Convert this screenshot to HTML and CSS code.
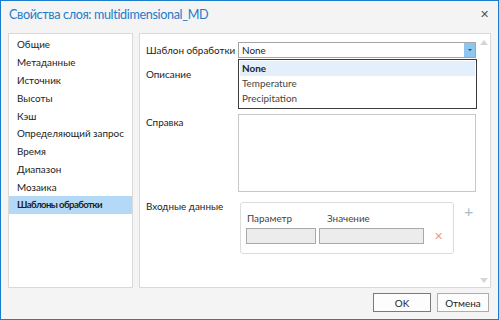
FILE: index.html
```html
<!DOCTYPE html>
<html lang="ru">
<head>
  <meta charset="UTF-8" />
  <title>Свойства слоя</title>
  <link rel="stylesheet" href="styles.css">
</head>
<body>
  <div class="window">
    <div class="titlebar">
      <span class="title">Свойства слоя: multidimensional_MD</span>
      <span class="close">&#x2715;</span>
    </div>

    <div class="content">
      <ul class="nav">
        <li>Общие</li>
        <li>Метаданные</li>
        <li>Источник</li>
        <li>Высоты</li>
        <li>Кэш</li>
        <li>Определяющий запрос</li>
        <li>Время</li>
        <li>Диапазон</li>
        <li>Мозаика</li>
        <li class="selected">Шаблоны обработки</li>
      </ul>

      <div class="panel">
        <div class="form">
          <div class="row row-template">
            <label class="label">Шаблон обработки</label>
            <div class="select">
              <span class="select-value">None</span>
              <span class="select-btn"><span class="tri"></span></span>
              <ul class="dropdown">
                <li class="active">None</li>
                <li>Temperature</li>
                <li>Precipitation</li>
              </ul>
            </div>
          </div>

          <div class="row row-desc">
            <label class="label">Описание</label>
            <div class="field desc"></div>
          </div>

          <div class="row row-help">
            <label class="label">Справка</label>
            <div class="field help"></div>
          </div>

          <div class="row row-input">
            <label class="label">Входные данные</label>
            <div class="params">
              <div class="params-head">
                <span class="col-a">Параметр</span>
                <span class="col-b">Значение</span>
              </div>
              <div class="params-row">
                <span class="cell cell-a"></span>
                <span class="cell cell-b"></span>
                <span class="remove">&#x2715;</span>
              </div>
            </div>
            <span class="add">+</span>
          </div>
        </div>

        <div class="scrollbar">
          <span class="arrow up"></span>
          <span class="arrow down"></span>
        </div>
      </div>
    </div>

    <div class="footer">
      <button class="btn btn-ok">OK</button>
      <button class="btn btn-cancel">Отмена</button>
    </div>
  </div>
</body>
</html>
```

FILE: styles.css
```css
* { box-sizing: border-box; }
body {
  margin: 0;
  font-family: 'Lato', 'Noto Sans', sans-serif;
  font-size: 9.9px;
  color: #222;
}
.window {
  width: 499px;
  height: 320px;
  border: 1px solid #1b7ccc;
  background-color: #f4f4f4;
  display: flex;
  flex-direction: column;
}
.titlebar {
  height: 32px;
  display: flex;
  align-items: center;
  justify-content: space-between;
  padding: 0 9px 6px 8px;
}
.title {
  font-size: 12.6px;
  letter-spacing: -0.35px;
  color: #1d7bc9;
}
.close {
  font-size: 11px;
  color: #555;
}
.content {
  flex: 1;
  display: flex;
  gap: 6px;
  padding: 0 7px 0 7px;
}
.nav {
  list-style: none;
  margin: 0;
  padding: 1px 0 0;
  width: 125px;
  background: #fff;
  border: 1px solid #d9d9d9;
}
.nav li {
  height: 17.9px;
  line-height: 18px;
  padding-left: 8px;
  white-space: nowrap;
}
.nav li.selected {
  background-color: #b4d9f7;
  font-weight: bold;
  font-size: 9.6px;
  letter-spacing: -0.6px;
}
.panel {
  flex: 1;
  display: flex;
  background: #fff;
  border: 1px solid #d9d9d9;
}
.form {
  flex: 1;
  padding: 8px 0 0 6px;
}
.row {
  display: flex;
  margin-bottom: 7px;
}
.label {
  width: 92px;
  flex-shrink: 0;
  line-height: 14px;
  white-space: nowrap;
}
.row-template {
  align-items: center;
}
.select {
  position: relative;
  width: 238px;
  height: 16px;
  border: 1px solid #a5a5a5;
  display: flex;
}
.select-value {
  flex: 1;
  padding-left: 3px;
  line-height: 14px;
}
.select-btn {
  width: 11px;
  background-color: #8fc6ef;
  display: flex;
  align-items: center;
  justify-content: center;
}
.tri {
  border-left: 2px solid transparent;
  border-right: 2px solid transparent;
  border-top: 2px solid #444;
}
.dropdown {
  position: absolute;
  left: -1px;
  top: 16px;
  width: 239px;
  margin: 0;
  padding: 1px 1px 2px;
  list-style: none;
  background: #fff;
  border: 1px solid #3c3c3c;
  z-index: 10;
}
.dropdown li {
  height: 15px;
  line-height: 14px;
  padding-left: 2px;
  color: #444;
}
.dropdown li.active {
  background-color: #e3f0fb;
  font-weight: bold;
  color: #222;
}
.row-desc .label {
  padding-top: 2px;
}
.field {
  width: 238px;
  border: 1px solid #c8c8c8;
}
.desc {
  height: 42px;
}
.help {
  height: 78px;
}
.row-help .label {
  padding-top: 1px;
}
.row-help {
  margin-bottom: 10px;
}
.row-input .label {
  margin-top: -3px;
}
.params {
  width: 214px;
  height: 52px;
  margin-left: 2px;
  border: 1px solid #dcdcdc;
  border-radius: 3px;
  padding: 8px 0 0 5px;
}
.params-head {
  display: flex;
  line-height: 14px;
  color: #444;
}
.col-a { width: 81px; padding-left: 1px; }
.params-row {
  display: flex;
  align-items: center;
  gap: 3px;
  margin-top: 3px;
}
.cell {
  height: 16px;
  background: #ececec;
  border: 1px solid #a9a9a9;
}
.cell-a { width: 70px; }
.cell-b { width: 105px; }
.remove {
  margin-left: 7px;
  color: #e8a08e;
  font-size: 11px;
}
.add {
  margin-left: 10px;
  margin-top: 1px;
  color: #a9bccd;
  font-size: 16px;
  line-height: 16px;
}
.scrollbar {
  width: 12px;
  display: flex;
  flex-direction: column;
  justify-content: space-between;
  align-items: center;
  padding: 6px 0 4px;
}
.arrow {
  border-left: 4px solid transparent;
  border-right: 4px solid transparent;
}
.arrow.up { border-bottom: 5px solid #d6d6d6; }
.arrow.down { border-top: 5px solid #d6d6d6; }
.footer {
  height: 31px;
  display: flex;
  justify-content: flex-end;
  align-items: center;
  gap: 6px;
  padding: 0 9px 2px 0;
}
.btn {
  height: 19px;
  border: 1px solid #adadad;
  background: #fdfdfd;
  font-family: inherit;
  font-size: 9.9px;
  color: #222;
  padding: 0;
}
.btn-ok { width: 58px; border-color: #7a7a7a; }
.btn-cancel { width: 52px; }
```
